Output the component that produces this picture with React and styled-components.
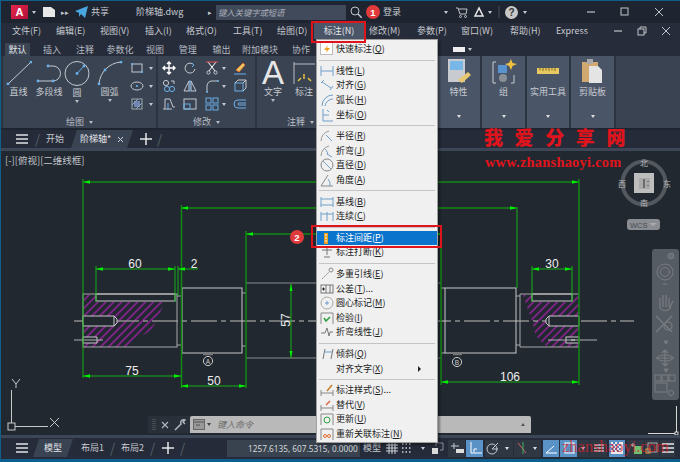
import React from 'react';
import styled, { createGlobalStyle } from 'styled-components';

const GlobalStyle = createGlobalStyle`
  html, body { margin: 0; padding: 0; background: #212830; }
  * { box-sizing: border-box; }
`;

const FONT = '"Noto Sans CJK SC", "Noto Sans", "Liberation Sans", sans-serif';
const BLUE = '#6ab0e8';

const Frame = styled.div`
  position: relative;
  width: 680px;
  height: 462px;
  overflow: hidden;
  display: flex;
  flex-direction: column;
  border: 1px solid #0e5f8c;
  border-width: 1px 0 3px 1px;
  background: #212830;
  font-family: ${FONT};
  font-size: 9px;
  line-height: 12px;
  color: #c6cad0;
`;

/* ---- title bar ---- */
const TitleBar = styled.div`
  height: 22px;
  display: flex;
  align-items: center;
  background: #1f2530;
  flex-shrink: 0;
`;
const Logo = styled.div`
  width: 17px;
  height: 14px;
  margin-left: 10px;
  background: linear-gradient(135deg, #e8264e, #b01038);
  color: #fff;
  font: bold 11px "Liberation Sans", sans-serif;
  display: flex;
  align-items: center;
  justify-content: center;
`;
const Caret = styled.span`
  width: 0;
  height: 0;
  flex-shrink: 0;
  border-left: 2.5px solid transparent;
  border-right: 2.5px solid transparent;
  border-top: 3px solid ${p => p.$color || '#c6cad0'};
  margin-left: ${p => p.$left || 0}px;
`;
const Spot = styled.span`
  flex-shrink: 0;
  display: inline-flex;
  align-items: center;
  margin-left: ${p => p.$left || 0}px;
  width: ${p => (p.$w ? `${p.$w}px` : 'auto')};
  color: ${p => p.$color || '#c6cad0'};
  font-size: ${p => p.$size || 9}px;
  white-space: nowrap;
`;
const SearchBox = styled.div`
  width: 130px;
  height: 15px;
  margin-left: 2px;
  padding-left: 2px;
  background: #414a5a;
  color: #a8adb6;
  font-style: italic;
  font-size: 8.3px;
  display: flex;
  align-items: center;
  flex-shrink: 0;
`;
const Help = styled.span`
  width: 13px;
  height: 13px;
  margin-left: 5px;
  border-radius: 50%;
  background: #c8c8c8;
  color: #333;
  font: bold 10px "Liberation Sans", sans-serif;
  display: flex;
  align-items: center;
  justify-content: center;
  flex-shrink: 0;
`;

/* ---- menu bar ---- */
const MenuBar = styled.div`
  height: 16px;
  display: flex;
  align-items: center;
  padding-left: 11px;
  background: #262c39;
  flex-shrink: 0;
`;
const MenuName = styled.span`
  width: ${p => p.$w}px;
  flex-shrink: 0;
  white-space: nowrap;
`;

/* ---- ribbon ---- */
const RibbonTabs = styled.div`
  height: 17px;
  display: flex;
  align-items: stretch;
  padding: 4px 0 0 4px;
  background: #262c39;
  flex-shrink: 0;
`;
const RibbonTab = styled.div`
  width: ${p => p.$w}px;
  margin-right: ${p => (p.$active ? 6 : 0)}px;
  flex-shrink: 0;
  display: flex;
  align-items: center;
  justify-content: center;
  background: ${p => (p.$active ? '#3b4453' : 'transparent')};
  color: ${p => (p.$active ? '#e4e6ea' : '#b4b9c1')};
`;
const Ribbon = styled.div`
  height: 74px;
  display: flex;
  gap: 2px;
  padding-left: 2px;
  background: #2c3441;
  border-bottom: 2px solid #1f2530;
  flex-shrink: 0;
`;
const Panel = styled.div`
  width: ${p => p.$w}px;
  flex-shrink: 0;
  display: flex;
  flex-direction: column;
  background: #3a4352;
`;
const Tools = styled.div`
  flex: 1;
  min-height: 0;
  display: flex;
  align-items: flex-start;
  padding-top: 5px;
`;
const PanelTitle = styled.div`
  height: 12px;
  display: flex;
  align-items: center;
  justify-content: ${p => p.$align || 'center'};
  gap: 5px;
  padding: ${p => p.$pad || '0'};
  color: #b8bcc4;
`;
const BigTool = styled.div`
  width: ${p => p.$w}px;
  flex-shrink: 0;
  display: flex;
  flex-direction: column;
  align-items: center;
  gap: 1px;
  white-space: nowrap;
`;
const BigGlyph = styled.span`
  height: 24px;
  font: 33px/24px "Liberation Sans", sans-serif;
  color: #e6e6e6;
`;
const IconGrid = styled.div`
  display: grid;
  grid-template-columns: ${p => p.$cols};
  grid-auto-rows: 18px;
  align-items: center;
  justify-items: center;
  margin-top: -2px;
`;
const Cell = styled.div`
  display: flex;
  align-items: center;
  gap: ${p => p.$gap || 3}px;
`;
const LightPanel = styled.div`
  width: ${p => p.$w}px;
  flex-shrink: 0;
  display: flex;
  flex-direction: column;
  align-items: center;
  background: #4a5567;
  padding-top: 3px;
`;
const LightLabel = styled.div`
  margin-top: 2px;
  white-space: nowrap;
  flex: 1;
`;
const LightFoot = styled.div`
  height: 9px;
`;

/* ---- file tabs ---- */
const DocTabs = styled.div`
  height: 18px;
  display: flex;
  align-items: center;
  background: #252b38;
  flex-shrink: 0;
`;
const Tilt = styled.span`
  width: 5px;
  text-align: center;
  color: #59616e;
  margin: 0 ${p => p.$gap || 6}px;
  font-size: 13px;
  flex-shrink: 0;
`;
const ActiveDoc = styled.div`
  width: ${p => p.$w}px;
  height: 100%;
  display: flex;
  align-items: center;
  justify-content: center;
  gap: 6px;
  margin-left: ${p => p.$left || 0}px;
  background: #3a4352;
  clip-path: polygon(6px 0, 100% 0, calc(100% - 6px) 100%, 0 100%);
  color: #e2e4e8;
  flex-shrink: 0;
`;
const DocStrip = styled.div`
  height: 3px;
  background: #3c4656;
  flex-shrink: 0;
`;

/* ---- canvas ---- */
const Viewport = styled.div`
  position: relative;
  flex: 1;
  background: #212830;
  overflow: hidden;
`;
const ViewLabel = styled.div`
  position: absolute;
  left: 4px;
  top: 3px;
  font-size: 9.5px;
  color: #c0c4ca;
`;
const Drawing = styled.svg`
  display: block;
`;
const Compass = styled.svg`
  position: absolute;
  left: 615px;
  top: 5px;
`;
const NavBar = styled.div`
  position: absolute;
  left: 651px;
  top: 98px;
  width: 27px;
  height: 151px;
  border-radius: 3px;
  background: #565c63;
`;
const CmdLine = styled.div`
  position: absolute;
  left: 147px;
  top: 265px;
  width: 383px;
  height: 17px;
  display: flex;
  background: #2a303a;
`;
const CmdHandle = styled.div`
  width: 42px;
  flex-shrink: 0;
  display: flex;
  align-items: center;
  justify-content: space-around;
  padding: 0 2px;
`;
const CmdInput = styled.div`
  flex: 1;
  display: flex;
  align-items: center;
  gap: 6px;
  padding-left: 3px;
  background: #b9b9b9;
  border-radius: 2px 2px 0 0;
  color: #6d6d6d;
  font-style: italic;
  font-size: 9px;
`;
const CmdFill = styled.span`
  flex: 1;
`;
const UpCaret = styled(Caret)`
  transform: rotate(180deg);
  margin-right: 6px;
`;

/* ---- status bar ---- */
const StatusStrip = styled.div`
  height: 3px;
  background: #3c4656;
  flex-shrink: 0;
`;
const StatusBar = styled.div`
  height: 21px;
  display: flex;
  align-items: center;
  padding-bottom: 1px;
  background: #252b38;
  flex-shrink: 0;
`;
const TabWrap = styled.div`
  height: 18px;
  display: flex;
`;
const CoordBox = styled.div`
  width: 133px;
  height: 17px;
  margin-left: ${p => p.$left}px;
  padding-left: 21px;
  display: flex;
  align-items: center;
  background: #39434f;
  color: #d4d7db;
  font: 8.25px "Noto Sans", sans-serif;
  white-space: nowrap;
  flex-shrink: 0;
`;
const StatusBtn = styled.div`
  width: ${p => p.$w || 17}px;
  height: 17px;
  flex-shrink: 0;
  margin-left: ${p => p.$left ?? 1}px;
  display: flex;
  align-items: center;
  justify-content: center;
  background: ${p => (p.$on ? '#5a92c6' : '#2f3743')};
`;

/* ---- dropdown ---- */
const Menu = styled.div`
  position: absolute;
  left: 315px;
  top: 38px;
  width: 122px;
  height: 404px;
  padding-top: 2px;
  background: #f0f0f0;
  border: 1px solid #a0a0a0;
  box-shadow: 2px 2px 2px rgba(0, 0, 0, 0.35);
  color: #222;
  z-index: 2;
`;
const Item = styled.div`
  position: relative;
  height: 14.6px;
  display: flex;
  align-items: center;
  white-space: nowrap;
  background: ${p => (p.$hot ? '#0a74cc' : 'transparent')};
  color: ${p => (p.$hot ? '#fff' : '#222')};
`;
const ItemIcon = styled.span`
  width: 19px;
  display: flex;
  justify-content: center;
  flex-shrink: 0;
`;
const Sep = styled.div`
  height: 1px;
  margin: 3px 2px;
  background: #c4c4c4;
`;
const SubArrow = styled.span`
  position: absolute;
  right: 16px;
  border-top: 3px solid transparent;
  border-bottom: 3px solid transparent;
  border-left: 3.5px solid #222;
`;
const ActiveMenu = styled.div`
  position: absolute;
  left: 313px;
  top: 22px;
  width: 50px;
  height: 16px;
  display: flex;
  align-items: center;
  justify-content: center;
  background: #4a5567;
  color: #e4e6ea;
  z-index: 1;
`;
const RedBox = styled.div`
  position: absolute;
  left: ${p => p.$x}px;
  top: ${p => p.$y}px;
  width: ${p => p.$w}px;
  height: ${p => p.$h}px;
  border: 2px solid #e0141c;
  z-index: 3;
`;
const Badge = styled.div`
  position: absolute;
  left: ${p => p.$x}px;
  top: ${p => p.$y}px;
  width: 14px;
  height: 14px;
  border-radius: 50%;
  background: #e03a3a;
  color: #fff;
  font: bold 9.5px "Liberation Sans", sans-serif;
  display: flex;
  align-items: center;
  justify-content: center;
  z-index: 3;
`;
const SiteTitle = styled.div`
  position: absolute;
  left: 483px;
  top: 122px;
  color: #e0141c;
  font: 900 19px/28px ${FONT};
  letter-spacing: 11.6px;
  white-space: nowrap;
  z-index: 3;
`;
const SiteUrl = styled.div`
  position: absolute;
  left: 484px;
  top: 153px;
  color: #e0141c;
  font: bold 14.3px/16px "Liberation Serif", serif;
  letter-spacing: 0.3px;
  white-space: nowrap;
  z-index: 3;
`;
const GhostUrl = styled.div`
  position: absolute;
  left: 561px;
  top: 437px;
  color: rgba(224, 30, 40, 0.7);
  font: 16.5px/18px "Liberation Serif", serif;
  white-space: nowrap;
  z-index: 3;
`;

/* ---- small svg helper ---- */
const Ic = ({ s = 14, w, h, children, stroke = '#c4c9d0', sw = 1 }) => (
  <svg width={w || s} height={h || s} viewBox={`0 0 ${w || s} ${h || s}`} fill="none" stroke={stroke} strokeWidth={sw} style={{ flexShrink: 0 }}>
    {children}
  </svg>
);

const Dot = ({ x, y, r = 1.4 }) => <circle cx={x} cy={y} r={r} fill={BLUE} stroke="none" />;

/* ribbon icons */
const LineIcon = () => (
  <Ic w={26} h={24}><path d="M2 23 25 1" /><Dot x={2} y={23} /><Dot x={25} y={1} /></Ic>
);
const PolyIcon = () => (
  <Ic w={26} h={24}>
    <path d="M2 20H17A7 7 0 0 0 17 5H12" /><Dot x={2} y={20} /><Dot x={17} y={20} /><Dot x={12} y={5} />
  </Ic>
);
const CircleIcon = () => (
  <Ic w={26} h={25}><circle cx="13" cy="12.5" r="12" /><path d="M13 12.5 20 5" stroke={BLUE} /><Dot x={13} y={12.5} /><Dot x={20} y={5} /></Ic>
);
const ArcIcon = () => (
  <Ic w={26} h={24}><path d="M2 23C3 11 12 2 24 1" /><Dot x={2} y={23} /><Dot x={8} y={9} /><Dot x={24} y={1} /></Ic>
);

const small = {
  rect: <><rect x="2" y="3" width="10" height="8" /><Dot x={2} y={3} r={1.1} /><Dot x={12} y={11} r={1.1} /></>,
  ellipse: <><ellipse cx="7" cy="7" rx="6" ry="4" /><Dot x={7} y={7} r={1.1} /></>,
  hatch: <><rect x="2" y="2" width="10" height="10" stroke="#9aa" /><rect x="4" y="4" width="6" height="6" fill="#6f87b0" stroke="none" /><path d="M2 8 8 2M6 12 12 6" stroke="#9ac" /></>,
  move: <path d="M7 1V13M1 7H13M5 3 7 1 9 3M5 11 7 13 9 11M3 5 1 7 3 9M11 5 13 7 11 9" stroke="#fff" strokeWidth="1.4" />,
  rotate: <><path d="M11 4A5 5 0 1 0 12 8" /><path d="M9 2 11 4 9 6" stroke={BLUE} /></>,
  trim: <><path d="M3 1 10 10M11 1 4 10" stroke="#fff" /><circle cx="3.5" cy="11.5" r="1.6" /><circle cx="10.5" cy="11.5" r="1.6" /><path d="M1 1H13" stroke="#e05050" /></>,
  erase: <><path d="M3 9 10 2 12 4 6 11Z" fill="#e8c860" stroke="#e07030" /><path d="M1 13H13" stroke={BLUE} /></>,
  copy: <><circle cx="4" cy="4" r="2.6" /><circle cx="5" cy="10" r="2.6" stroke={BLUE} /><circle cx="10" cy="10" r="2.6" stroke={BLUE} /><path d="M9 2 12 2 12 5" /></>,
  mirror: <><path d="M6 2 1 12H6ZM8 2 13 12H8Z" /><path d="M7 1V13" stroke={BLUE} /></>,
  fillet: <><path d="M2 13V7A5 5 0 0 1 7 2H13" /><Dot x={2} y={13} r={1} /><Dot x={13} y={2} r={1} /></>,
  box3d: <><rect x="2" y="4" width="8" height="8" stroke={BLUE} /><path d="M2 4 5 1H13V9L10 12M10 4 13 1" /></>,
  stretch: <><path d="M3 12V2H8L11 10H13M1 12H10" /><path d="M6 13V6" stroke={BLUE} /></>,
  scale: <><rect x="1" y="2" width="12" height="10" /><rect x="1" y="7" width="6" height="5" stroke={BLUE} /></>,
  array: <><rect x="1" y="1" width="5" height="5" stroke={BLUE} /><rect x="8" y="1" width="5" height="5" stroke={BLUE} /><rect x="1" y="8" width="5" height="5" stroke={BLUE} /><rect x="8" y="8" width="5" height="5" stroke={BLUE} /></>,
  offset: <path d="M13 3H5A3 3 0 0 0 5 11H13M13 6H6A1 1 0 0 0 6 8H13" stroke={BLUE} />,
};
const Small = ({ name }) => <Ic>{small[name]}</Ic>;

/* menu icons */
const I = ({ children }) => <Ic s={14} stroke="#6fa0cc">{children}</Ic>;
const menuIcons = {
  quick: <><rect x="0.5" y="0.5" width="12" height="12" stroke="#bbb" fill="#fff" /><path d="M8 3 4 8H7L6 11 10 6H7Z" fill="#f0a020" stroke="none" /></>,
  linear: <path d="M1 2V12M13 2V12M1 7H13" />,
  aligned: <path d="M1 5 4 2M10 12 13 8M2 4 11 10" />,
  arc: <path d="M2 13A11 11 0 0 1 13 2M5 13A8 8 0 0 1 13 6" />,
  ordinate: <path d="M3 1V13H13M3 7H9M7 2 9 4" />,
  radius: <><path d="M1 12A11 11 0 0 1 9 2" stroke="#999" /><path d="M6 6 12 12" /></>,
  jog: <><path d="M1 12A11 11 0 0 1 9 2" stroke="#999" /><path d="M5 5 8 9 7 10 12 13" /></>,
  diameter: <><circle cx="7" cy="7" r="6" stroke="#888" /><path d="M3 3 11 11" /></>,
  angle: <><path d="M1 13H13M1 13 8 2" stroke="#888" /><path d="M8 6A8 8 0 0 1 10 13" /></>,
  baseline: <path d="M1 2V12M13 2V12M1 4H13M1 10H13" />,
  cont: <path d="M1 3V12M7 3V12M13 3V12M1 5H13" />,
  spacing: <><rect x="4" y="2" width="4" height="11" fill="#e8a020" stroke="none" /><path d="M5 4H7M5 7H7M5 10H7" stroke="#fff" /></>,
  brk: <><path d="M2 5H12M7 2V10M4 12H10" stroke="#777" /><path d="M9 2H13" stroke="#4a86c0" /></>,
  leader: <><circle cx="11" cy="3" r="2" stroke="#888" /><path d="M2 12 9 5" stroke="#888" strokeDasharray="2 1" /></>,
  tol: <><rect x="1" y="3" width="12" height="8" stroke="#777" /><path d="M6 3V11M10 3V11" stroke="#777" /><path d="M2 7H5M3.5 5.5V8.5" stroke="#222" /></>,
  center: <><circle cx="7" cy="7" r="6" stroke="#aaa" /><path d="M5 7H9M7 5V9" /></>,
  inspect: <><path d="M1 2H13M1 2V13M13 2V13" stroke="#888" /><path d="M4 7 6 10 10 6" stroke="#2aa040" strokeWidth="1.5" /></>,
  jogline: <path d="M1 8H5L7 3 9 11 10 7H13" stroke="#777" />,
  oblique: <><path d="M3 12 5 2M11 12 13 2" stroke="#777" /><path d="M4 5H12" /></>,
  none: null,
  style: <><path d="M1 10H13M1 7V13M13 7V13" stroke="#888" /><path d="M7 8 12 2" stroke="#c08030" strokeWidth="1.5" /></>,
  override: <><path d="M1 10H13M1 7V13M13 7V13" stroke="#888" /><path d="M6 7 10 3" stroke="#e06040" strokeWidth="1.5" /></>,
  update: <><path d="M1 2H13M1 2V13M13 2V13" stroke="#888" /><path d="M4 8A3 3 0 0 1 10 8M10 8A3 3 0 0 1 4 8" stroke="#2aa040" /></>,
  relink: <><path d="M1 2H13M1 2V13M13 2V13" stroke="#888" /><circle cx="5" cy="9" r="1.5" stroke="#e07030" /><circle cx="9" cy="9" r="1.5" stroke="#e07030" /></>,
};

const MENU = [
  ['快速标注', 'Q', '', 'quick'], 0,
  ['线性', 'L', '', 'linear'], ['对齐', 'G', '', 'aligned'], ['弧长', 'H', '', 'arc'], ['坐标', 'O', '', 'ordinate'], 0,
  ['半径', 'R', '', 'radius'], ['折弯', 'J', '', 'jog'], ['直径', 'D', '', 'diameter'], ['角度', 'A', '', 'angle'], 0,
  ['基线', 'B', '', 'baseline'], ['连续', 'C', '', 'cont'], 0,
  ['标注间距', 'P', '', 'spacing', 'hot'], ['标注打断', 'K', '', 'brk'], 0,
  ['多重引线', 'E', '', 'leader'], ['公差', 'T', '...', 'tol'], ['圆心标记', 'M', '', 'center'], ['检验', 'I', '', 'inspect'], ['折弯线性', 'J', '', 'jogline'], 0,
  ['倾斜', 'Q', '', 'oblique'], ['对齐文字', 'X', '', 'none', 'sub'], 0,
  ['标注样式', 'S', '...', 'style'], ['替代', 'V', '', 'override'], ['更新', 'U', '', 'update'], ['重新关联标注', 'N', '', 'relink'],
];

const MENUBAR = [
  ['文件(F)', 44], ['编辑(E)', 44], ['视图(V)', 45], ['插入(I)', 41], ['格式(O)', 47], ['工具(T)', 44], ['绘图(D)', 46],
  ['', 46], ['修改(M)', 48], ['参数(P)', 44], ['窗口(W)', 49], ['帮助(H)', 46], ['Express', 40],
];
const RIBBON_TABS = [
  ['默认', 25], ['插入', 32], ['注释', 34], ['参数化', 36], ['视图', 34], ['管理', 31.5], ['输出', 36], ['附加模块', 41], ['协作', 41],
];

/* canvas pieces */
const G = '#14b014';
const GD = '#128a12';
const Arrow = ({ x, y, dir, color = '#00f000' }) => (
  <polygon points={`${x},${y} ${x + dir * 7},${y - 1.8} ${x + dir * 7},${y + 1.8}`} fill={color} stroke="none" />
);
const HDim = ({ x1, x2, y, c = G, sw = 1 }) => (
  <g>
    <path d={`M${x1} ${y}H${x2}`} stroke={c} strokeWidth={sw} />
    <Arrow x={x1} y={y} dir={1} />
    <Arrow x={x2} y={y} dir={-1} />
  </g>
);
const Label = styled.text`
  font: 12px "Liberation Sans", sans-serif;
  fill: #eee;
  text-anchor: middle;
`;

const CadDrawing = () => (
  <Drawing width="679" height="284" viewBox="1 151 679 284">
    <defs>
      <pattern id="hatch" width="5.6" height="5.6" patternUnits="userSpaceOnUse" patternTransform="rotate(45)">
        <path d="M2.8 0V5.6" stroke="#d020d0" strokeWidth="1" />
      </pattern>
    </defs>

    {/* hatching */}
    <path d="M84 295H96V302H166C160 310 159 316 157 320C153 328 149 332 145 334C137 337 132 340 128 347H84Z" fill="url(#hatch)" />
    <path d="M523 295H532V302H572V295H579V347H548C541 342 536 338 534 330C533 321 527 308 523 295Z" fill="url(#hatch)" />

    {/* centre line */}
    <path d="M74 321H634" stroke="#8c8c8c" strokeWidth="1.5" strokeDasharray="26 4 5 4" />

    {/* shaft outline */}
    <g stroke="#a8a8a8" fill="none">
      <rect x="83" y="294" width="94" height="53" />
      <rect x="96" y="294" width="79" height="7" stroke="#c8c8c8" />
      <path d="M177 296H181M177 345H181" />
      <rect x="182" y="288" width="60" height="65" stroke="#c8c8c8" />
      <path d="M242 293H246M242 346H246" />
      <path d="M246 283H316M246 358H316M436 283H441M436 358H441" stroke="#8c8c8c" />
      <path d="M441 288H445M441 353H445" />
      <rect x="445" y="288" width="71" height="65" stroke="#c8c8c8" />
      <path d="M516 296H520M516 345H520" />
      <path d="M520 294V347H579M520 294H579" />
      <rect x="532" y="294" width="40" height="7" stroke="#c8c8c8" />
    </g>

    {/* holes */}
    <g stroke="#c8c8c8" fill="#212830">
      <path d="M83 316H114L117 319V323L114 326H83Z" />
      <path d="M114 316V326" fill="none" />
      <path d="M83 337H97V343H83Z" />
      <path d="M579 316H549L546 319V323L549 326H579Z" />
      <path d="M549 316V326" fill="none" />
      <rect x="566" y="337" width="13" height="6" />
    </g>
    <path d="M74 340H103M548 340H597" stroke="#b0b0b0" fill="none" />
    <path d="M571 340H575" stroke="#ddd" fill="none" />

    {/* section markers */}
    <path d="M203 354.5H213" stroke="#777" strokeWidth="1.5" />
    <path d="M453 354.5H462" stroke="#777" strokeWidth="1.5" />
    <circle cx="208" cy="361" r="4.6" stroke="#c8c8c8" fill="none" />
    <circle cx="457" cy="362" r="4.6" stroke="#c8c8c8" fill="none" />
    <text x="208" y="363.5" fontSize="6.5" textAnchor="middle" fill="#ccc" fontFamily="Liberation Sans">A</text>
    <text x="457" y="364.5" fontSize="6.5" textAnchor="middle" fill="#ccc" fontFamily="Liberation Sans">B</text>

    {/* extension lines */}
    <g stroke={G} fill="none">
      <path d="M83 179V378" />
      <path d="M96 266V302M175 266V302M178 266V296" />
      <path d="M181.5 205V388" stroke={GD} strokeWidth="1.5" />
      <path d="M246 231V388" stroke={GD} strokeWidth="1.5" />
      <path d="M441 234V385" stroke={GD} strokeWidth="1.5" />
      <path d="M517 207V288" />
      <path d="M579 179V385" stroke={GD} strokeWidth="1.5" />
      <path d="M532 266V302M572 266V302" />
      <path d="M291 284V358" />
    </g>

    {/* dimension lines */}
    <HDim x1={83} x2={579} y={182} c={GD} sw={1.5} />
    <HDim x1={181} x2={517} y={208} c={GD} sw={1.5} />
    <HDim x1={246} x2={441} y={234} c={GD} sw={1.5} />
    <HDim x1={96} x2={175} y={269} />
    <path d="M178 269H198" stroke={G} />
    <Arrow x={178} y={269} dir={1} />
    <HDim x1={83} x2={181} y={376} />
    <HDim x1={181} x2={246} y={386} />
    <HDim x1={441} x2={579} y={382} />
    <HDim x1={532} x2={572} y={269} />
    <polygon points="291,284 289.5,291 292.5,291" fill="#00f000" />
    <polygon points="291,358 289.5,351 292.5,351" fill="#00f000" />

    <Label x="135" y="268">60</Label>
    <Label x="194" y="268">2</Label>
    <Label x="132" y="375">75</Label>
    <Label x="214" y="385">50</Label>
    <Label x="510" y="381">106</Label>
    <Label x="552" y="268">30</Label>
    <Label x="0" y="0" transform="translate(290 320) rotate(-90)">57</Label>

    {/* ucs */}
    <g stroke="#c8c8c8" fill="none">
      <path d="M11.5 390V423M15 426.5H48" />
      <rect x="8" y="423" width="7" height="7" />
      <path d="M12 379 16 384 20 379M16 384V388M50 418 59 427M59 418 50 427" />
    </g>
    <path d="M676.5 406V433.5H648" stroke="#d8d8d8" fill="none" />
    <rect x="675" y="432" width="3" height="3" fill="#212830" stroke="#fff" strokeWidth="0.8" />
  </Drawing>
);

const CaretBtn = () => <StatusBtn $left={0} $w={12}><Caret $color="#e0e0e0" /></StatusBtn>;

const StatusIcons = () => (
  <>
    <Spot $left={3}>模型</Spot>
    <Spot $left={4} $w={14}>
      <Ic><path d="M1 4H13M1 7H13M1 10H13M4 1V13M7 1V13M10 1V13" stroke="#cfd2d6" /></Ic>
    </Spot>
    <Spot $left={1} $w={14}>
      <Ic><path d="M2 3H12M2 7H12M2 11H12" stroke="#cfd2d6" strokeDasharray="1.5 2" strokeWidth="1.5" /></Ic>
    </Spot>
    <Caret $left={7} />
    <Spot $left={6} $w={14}>
      <Ic><rect x="1" y="7" width="6" height="6" fill="#d8dadc" stroke="none" /><path d="M5 5V2H12V9H9" stroke="#8a909a" /></Ic>
    </Spot>
    <StatusBtn $left={3}>
      <Ic><path d="M1 5H9M4 2V8" /><rect x="6" y="8" width="8" height="4" fill="#ddd" stroke="none" /></Ic>
    </StatusBtn>
    <StatusBtn $on $left={1}>
      <Ic stroke="#fff"><path d="M3 1V12H14" /><path d="M6 11V8H9" /></Ic>
    </StatusBtn>
    <StatusBtn $left={2} $w={16}>
      <Ic><circle cx="6" cy="8" r="5" /><path d="M6 8 12 2M6 8H12" /></Ic>
    </StatusBtn>
    <CaretBtn />
    <StatusBtn $left={1} $w={15}>
      <Ic><path d="M3 2 11 12" stroke="#d06060" /><path d="M8 1V13" stroke="#40b060" /></Ic>
    </StatusBtn>
    <CaretBtn />
    <StatusBtn $on $left={2} $w={16}>
      <Ic stroke="#fff"><path d="M2 12H13M2 12 10 5" /></Ic>
    </StatusBtn>
    <StatusBtn $on $left={1}>
      <Ic stroke="#fff"><rect x="3" y="2" width="9" height="10" /></Ic>
    </StatusBtn>
    <CaretBtn />
    <StatusBtn $left={1}>
      <Ic sw={1.5}><path d="M2 4H12M2 7H12M2 10H12" /></Ic>
    </StatusBtn>
    <StatusBtn $on $left={2} $w={16}>
      <Ic>
        <rect x="1" y="1" width="12" height="12" fill="#f0e8e8" stroke="none" />
        <path d="M1 4H13M1 8H13M4 1V13M8 1V13" stroke="#5a80c0" strokeDasharray="2 2" strokeWidth="2" />
      </Ic>
    </StatusBtn>
    <StatusBtn $left={2}>
      <Ic><rect x="5" y="5" width="8" height="8" fill="#70c070" stroke="none" /><path d="M2 4H6M4 2V6" /></Ic>
    </StatusBtn>
    <StatusBtn $left={1} $w={14}>
      <Ic><rect x="3" y="2" width="9" height="9" stroke="#aaa" /><rect x="1" y="8" width="4" height="4" stroke="#e0a040" /></Ic>
    </StatusBtn>
    <StatusBtn $left={1} $w={15}>
      <Ic sw={1.6} stroke="#e8e8e8"><path d="M1 3H13M1 7H13M1 11H13" /></Ic>
    </StatusBtn>
  </>
);

const Burger = ({ left = 14 }) => (
  <Spot $left={left}>
    <Ic sw={1.6} stroke="#e0e2e6"><path d="M1 3H13M1 7H13M1 11H13" /></Ic>
  </Spot>
);
const Plus = ({ left }) => (
  <Spot $left={left} $w={14}>
    <Ic sw={1.5} stroke="#e8e8e8"><path d="M7 1V13M1 7H13" /></Ic>
  </Spot>
);
const MinIcon = () => <Ic w={10} h={10} sw={1.2} stroke="#bfc3c9"><path d="M1 5H9" /></Ic>;
const CloseIcon = () => <Ic w={10} h={10} stroke="#bfc3c9"><path d="M1 1 9 9M9 1 1 9" /></Ic>;

const App = () => (
  <Frame>
    <GlobalStyle />

    <TitleBar>
      <Logo>A</Logo>
      <Caret $left={4} />
      <Spot $left={6} $w={14}>
        <Ic w={14} h={12} stroke="none"><path d="M1 1H9L13 4V11H1Z" fill="#e8e8e8" /></Ic>
      </Spot>
      <Spot $left={5} $w={10} $size={7}>▸▸</Spot>
      <Spot $left={4} $w={13}>
        <Ic w={13} h={12} stroke="none"><path d="M0 5 13 0 10 12 6 8 4 11 4 7Z" fill="#4aa6e0" /></Ic>
      </Spot>
      <Spot $left={3} $w={18}>共享</Spot>
      <Spot $left={27} $w={47}>阶梯轴.dwg</Spot>
      <Spot $left={25} $w={6} $size={7}>▸</Spot>
      <SearchBox>键入关键字或短语</SearchBox>
      <Spot $left={4} $w={12}>
        <Ic s={12} stroke="#bfc3c9"><circle cx="5" cy="5" r="4" /><path d="M8 8 12 12" strokeWidth="1.5" /></Ic>
      </Spot>
      <Spot $left={21} $w={18}>登录</Spot>
      <Caret $left={43} />
      <Spot $left={8} $w={12}>
        <Ic s={12} stroke="#bfc3c9"><path d="M0 2H2L4 8H10L11 3H3" /><circle cx="4.5" cy="10.5" r="1" /><circle cx="9.5" cy="10.5" r="1" /></Ic>
      </Spot>
      <Spot $left={5} $w={12}>
        <Ic s={12} sw={1.5} stroke="#e8e8e8"><path d="M6 2 2 10H10Z" /></Ic>
      </Spot>
      <Caret $left={3} />
      <Spot $left={6} $w={2}>
        <Ic w={2} h={14} stroke="#49505c"><path d="M1 1V13" /></Ic>
      </Spot>
      <Help>?</Help>
      <Caret $left={5} />
      <Spot $left={59} $w={10}><MinIcon /></Spot>
      <Spot $left={24} $w={10}>
        <Ic w={10} h={10} stroke="#bfc3c9"><rect x="1" y="1" width="7" height="7" /></Ic>
      </Spot>
      <Spot $left={24} $w={10}><CloseIcon /></Spot>
    </TitleBar>

    <MenuBar>
      {MENUBAR.map(([name, w], i) => <MenuName key={i} $w={w}>{name}</MenuName>)}
      <Spot $left={17} $w={10}><MinIcon /></Spot>
      <Spot $left={14} $w={10}>
        <Ic w={10} h={10} stroke="#bfc3c9"><rect x="1" y="3" width="6" height="6" /><path d="M3 3V1H9V7H7" /></Ic>
      </Spot>
      <Spot $left={14} $w={10}><CloseIcon /></Spot>
    </MenuBar>

    <RibbonTabs>
      {RIBBON_TABS.map(([name, w], i) => <RibbonTab key={name} $w={w} $active={i === 0}>{name}</RibbonTab>)}
      <Spot $left={131} $w={12}>
        <Ic w={12} h={5} stroke="none"><rect width="12" height="5" fill="#eee" /></Ic>
      </Spot>
      <Spot $left={3}><Caret /></Spot>
    </RibbonTabs>

    <Ribbon>
      <Panel $w={153}>
        <Tools>
          <BigTool $w={31}><LineIcon />直线</BigTool>
          <BigTool $w={30}><PolyIcon />多段线</BigTool>
          <BigTool $w={26}><CircleIcon />圆<Caret $color="#b8bcc4" /></BigTool>
          <BigTool $w={39}><ArcIcon />圆弧<Caret $color="#b8bcc4" /></BigTool>
          <IconGrid $cols="24px">
            {['rect', 'ellipse', 'hatch'].map(n => <Cell key={n} $gap={5}><Small name={n} /><Caret /></Cell>)}
          </IconGrid>
        </Tools>
        <PanelTitle>绘图<Caret $color="#b8bcc4" /></PanelTitle>
      </Panel>
      <Panel $w={97}>
        <Tools>
          <IconGrid $cols="21px 22px 28px 22px">
            <Small name="move" /><Small name="rotate" /><Cell><Small name="trim" /><Caret /></Cell><Small name="erase" />
            <Small name="copy" /><Small name="mirror" /><Cell><Small name="fillet" /><Caret /></Cell><Small name="box3d" />
            <Small name="stretch" /><Small name="scale" /><Cell><Small name="array" /><Caret /></Cell><Small name="offset" />
          </IconGrid>
        </Tools>
        <PanelTitle>修改<Caret $color="#b8bcc4" /></PanelTitle>
      </Panel>
      <Panel $w={178}>
        <Tools>
          <BigTool $w={32}>
            <BigGlyph>A</BigGlyph>
            文字
            <Caret $color="#b8bcc4" />
          </BigTool>
          <BigTool $w={30}>
            <Ic w={24} h={24}>
              <path d="M2 1V23M2 3H23" stroke="#b8bcc4" />
              <path d="M6 20 9 17M12 18V13M19 20 16 17" stroke="#e8c040" strokeWidth="1.5" />
            </Ic>
            标注
          </BigTool>
        </Tools>
        <PanelTitle $align="flex-start" $pad="0 0 0 30px">注释<Caret $color="#b8bcc4" /></PanelTitle>
      </Panel>
      <LightPanel $w={43}>
        <Ic w={26} h={25} stroke="none">
          <rect x="2" y="0" width="17" height="23" fill="#c8ccd0" />
          <rect x="4" y="2" width="13" height="9" fill="#78b8e8" />
          <path d="M12 21 22 13 25 16 16 24Z" fill="#e8c870" />
        </Ic>
        <LightLabel>特性</LightLabel>
        <LightFoot><Caret $color="#e0e0e0" /></LightFoot>
      </LightPanel>
      <LightPanel $w={43}>
        <Ic w={26} h={25}>
          <path d="M5 3H2V24H5M20 24H23V16" stroke="#c8ccd0" />
          <rect x="7" y="6" width="9" height="8" fill="#5a94d0" stroke="none" />
          <circle cx="12" cy="19" r="4" fill="#8a9098" stroke="none" />
          <path d="M20 0 21.5 4 26 5 21.5 7 20 11 18 7 14 5 18 4Z" fill="#f0c040" stroke="none" />
        </Ic>
        <LightLabel>组</LightLabel>
        <LightFoot><Caret $color="#e0e0e0" /></LightFoot>
      </LightPanel>
      <LightPanel $w={42}>
        <Ic w={24} h={25}>
          <rect x="1" y="9" width="22" height="6" fill="#e8c860" stroke="none" />
          <path d="M4 9V11.5M7 9V12M10 9V11.5M13 9V12M16 9V11.5M19 9V12" stroke="#8a6a20" />
        </Ic>
        <LightLabel>实用工具</LightLabel>
        <LightFoot><Caret $color="#e0e0e0" /></LightFoot>
      </LightPanel>
      <LightPanel $w={43}>
        <Ic w={24} h={25} stroke="none">
          <rect x="1" y="3" width="16" height="20" fill="#d0a870" />
          <rect x="6" y="0" width="6" height="5" fill="#a8a8a8" />
          <path d="M8 7H17L21 11V24H8Z" fill="#e4e4e4" />
        </Ic>
        <LightLabel>剪贴板</LightLabel>
        <LightFoot><Caret $color="#e0e0e0" /></LightFoot>
      </LightPanel>
      <Panel $w={64} />
    </Ribbon>

    <DocTabs>
      <Burger />
      <Tilt>/</Tilt>
      <span>开始</span>
      <ActiveDoc $w={62} $left={7}>
        阶梯轴*
        <Ic w={7} h={7} stroke="#d0d4da"><path d="M1 1 6 6M6 1 1 6" /></Ic>
      </ActiveDoc>
      <Plus left={6} />
      <Tilt $gap={4}>/</Tilt>
    </DocTabs>
    <DocStrip />

    <Viewport>
      <CadDrawing />
      <ViewLabel>[-][俯视][二维线框]</ViewLabel>
      <Compass width="60" height="78" viewBox="0 0 60 78">
        <circle cx="28" cy="27" r="21.5" fill="none" stroke="#53585f" strokeWidth="4" />
        <rect x="18" y="17" width="20" height="20" fill="#bdbdbd" />
        <rect x="23" y="22" width="11" height="11" fill="#a9a9a9" />
        <path d="M28 23V32" stroke="#444" strokeWidth="1.2" />
        <path d="M32 25V26M32 29V30" stroke="#444" />
        {[['北', 28, 10], ['南', 28, 50], ['东', 51, 31], ['西', 6, 31]].map(([t, x, y]) => (
          <text key={t} x={x} y={y} fontSize="8" textAnchor="middle" fill="#b8b8b8" fontFamily="Noto Sans CJK SC">{t}</text>
        ))}
        <rect x="11" y="63" width="33" height="11" rx="3" fill="#8a8d92" />
        <text x="14" y="71.5" fontSize="7.5" fill="#4a4d52" fontFamily="Liberation Sans">WCS</text>
        <path d="M33 67H41L37 70Z" fill="#a8abb0" />
      </Compass>
      <NavBar>
        <svg width="27" height="151" viewBox="0 0 27 151" fill="none" stroke="#797d82">
          <circle cx="19" cy="7" r="3" fill="#6a6e73" />
          <circle cx="13" cy="23" r="8" />
          <circle cx="13" cy="23" r="4.5" />
          <path d="M11 35H15" />
          <path d="M8 58V49M11 58V46M14 58V46M17 58V49M8 58C8 62 18 64 19 56L21 52" strokeWidth="1.2" />
          <path d="M4 67 20 83M20 67 4 83" strokeWidth="1.2" />
          <circle cx="16" cy="77" r="4" strokeWidth="1.2" />
          <path d="M12 92H16L14 95Z" fill="#797d82" />
          <path d="M13 101V117M4 109H22M10 104 13 101 16 104M10 114 13 117 16 114" strokeWidth="1.2" />
          <ellipse cx="13" cy="109" rx="8" ry="3" />
          <path d="M12 120H16L14 123Z" fill="#797d82" />
          <rect x="3" y="126" width="6" height="6" /><rect x="10" y="126" width="6" height="6" /><rect x="17" y="126" width="6" height="6" />
          <rect x="3" y="134" width="12" height="9" />
          <circle cx="19" cy="144" r="2.5" />
        </svg>
      </NavBar>
      <CmdLine>
        <CmdHandle>
          <Ic w={4} h={13} stroke="#666"><path d="M1 1V12M3 1V12" strokeDasharray="1 1" /></Ic>
          <Ic w={8} h={8} sw={1.2} stroke="#b0b4ba"><path d="M1 1 7 7M7 1 1 7" /></Ic>
          <Ic w={12} h={12} sw={1.5} stroke="#b0b4ba"><path d="M1 11 7 5A3 3 0 0 1 11 1L9 3 11 5" /></Ic>
        </CmdHandle>
        <CmdInput>
          <Ic w={18} h={11} stroke="#666">
            <rect x="0.5" y="0.5" width="11" height="10" fill="#999" />
            <path d="M1 3H11M3 6H7" stroke="#555" />
            <path d="M14 4H18L16 7Z" fill="#444" stroke="none" />
          </Ic>
          键入命令
          <CmdFill />
          <UpCaret $color="#555" />
        </CmdInput>
      </CmdLine>
    </Viewport>

    <StatusStrip />
    <StatusBar>
      <Burger />
      <TabWrap>
        <ActiveDoc $w={40} $left={4}>模型</ActiveDoc>
      </TabWrap>
      <Spot $left={8} $w={23}>布局1</Spot>
      <Tilt $gap={6}>/</Tilt>
      <Spot $left={0} $w={23}>布局2</Spot>
      <Tilt $gap={6}>/</Tilt>
      <Plus left={0} />
      <Tilt $gap={5}>/</Tilt>
      <CoordBox $left={37}>1257.6135, 607.5315, 0.0000</CoordBox>
      <StatusIcons />
    </StatusBar>

    <ActiveMenu>标注(N)</ActiveMenu>
    <Menu>
      {MENU.map((m, i) => {
        if (!m) return <Sep key={i} />;
        const [name, key, tail, icon, flag] = m;
        return (
          <Item key={i} $hot={flag === 'hot'}>
            <ItemIcon>{menuIcons[icon] && <I>{menuIcons[icon]}</I>}</ItemIcon>
            {name}(<u>{key}</u>){tail}
            {flag === 'sub' && <SubArrow />}
          </Item>
        );
      })}
    </Menu>

    <RedBox $x={310} $y={20} $w={55} $h={22} />
    <RedBox $x={310} $y={224} $w={131} $h={23} />
    <Badge $x={365} $y={4}>1</Badge>
    <Badge $x={289} $y={229}>2</Badge>

    <SiteTitle>我爱分享网</SiteTitle>
    <SiteUrl>www.zhanshaoyi.com</SiteUrl>
    <GhostUrl>zhanshaoyi.com</GhostUrl>
  </Frame>
);

export default App;
